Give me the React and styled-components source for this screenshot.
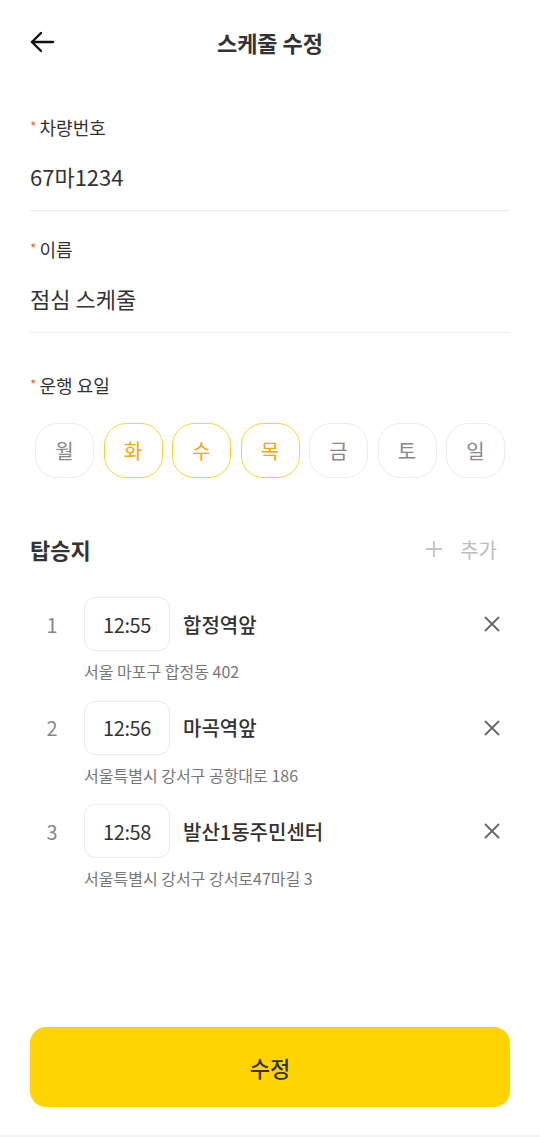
import styled, { createGlobalStyle } from "styled-components"

const GlobalStyle = createGlobalStyle`
  html, body {
    margin: 0;
    padding: 0;
    background: #fff;
  }
  body {
    font-family: "Noto Sans CJK KR", "Noto Sans", sans-serif;
    color: #333;
  }
  * { box-sizing: border-box; }
`

const Page = styled.div`
  width: 540px;
  height: 1137px;
  display: flex;
  flex-direction: column;
  border-bottom: 2px solid #f3f3f3;
`

const Header = styled.header`
  height: 84px;
  display: grid;
  grid-template-columns: 84px 1fr 84px;
  align-items: center;
`

const BackButton = styled.button`
  border: 0;
  background: none;
  padding: 0 0 0 29px;
  display: flex;
  align-items: center;
  height: 24px;
  cursor: pointer;
`

const Title = styled.h1`
  margin: 0;
  text-align: center;
  font-size: 22px;
  line-height: 30px;
  font-weight: 700;
  color: #333;
`

const Form = styled.div`
  padding: 5px 30px 0;
  display: flex;
  flex-direction: column;
  flex: 1;
`

const Field = styled.div`
  padding-top: ${p => p.$top || 26}px;
  border-bottom: ${p => (p.$line ? "1px solid #ebebeb" : "0")};
  padding-bottom: ${p => (p.$line ? 19 : 0)}px;
`

const Label = styled.div`
  font-size: 18px;
  line-height: 24px;
  color: #333;
  display: flex;
  align-items: center;
  gap: 3px;
`

const Star = styled.span`
  color: #ff6b15;
  font-size: 14px;
  line-height: 14px;
  align-self: flex-start;
  margin-top: 4px;
`

const Value = styled.div`
  margin-top: 22px;
  font-size: 22px;
  line-height: 30px;
  color: #333;
`

const Days = styled.div`
  margin-top: 26px;
  padding: 0 5px;
  display: flex;
  gap: 9.5px;
`

const Day = styled.button`
  width: 59px;
  height: 55px;
  border-radius: 22px;
  background: #fff;
  border: 1.5px solid ${p => (p.$on ? "#ffd22e" : "#ececec")};
  color: ${p => (p.$on ? "#f8a500" : "#888")};
  font-family: inherit;
  font-size: 20px;
  padding: 0;
  display: flex;
  align-items: center;
  justify-content: center;
`

const SectionHead = styled.div`
  margin-top: 56px;
  display: flex;
  align-items: center;
  justify-content: space-between;
  height: 30px;
`

const SectionTitle = styled.h2`
  margin: 0;
  font-size: 22px;
  font-weight: 700;
  color: #333;
`

const AddButton = styled.button`
  border: 0;
  background: none;
  padding: 0 13px 0 0;
  display: flex;
  align-items: center;
  gap: 18px;
  color: #bdbdbd;
  font-family: inherit;
  font-size: 20px;
`

const Stops = styled.ul`
  list-style: none;
  margin: 33px 0 0;
  padding: 0;
  display: flex;
  flex-direction: column;
  gap: 18.5px;
`

const Stop = styled.li`
  display: grid;
  grid-template-columns: 54px 86px 1fr 30px;
  grid-template-rows: 54px auto;
  row-gap: 9px;
  align-items: center;
  padding-right: 10px;
`

const Num = styled.span`
  font-size: 20px;
  color: #888;
  text-align: center;
  padding-right: 10px;
`

const TimeBox = styled.div`
  height: 54px;
  border: 1px solid #ebebeb;
  border-radius: 11px;
  display: flex;
  align-items: center;
  justify-content: center;
  font-size: 20px;
  color: #333;
  letter-spacing: -0.4px;
`

const StopName = styled.span`
  padding-left: 13px;
  font-size: 20px;
  font-weight: 500;
  color: #333;
`

const Remove = styled.button`
  border: 0;
  background: none;
  padding: 0;
  display: flex;
  align-items: center;
  justify-content: flex-end;
`

const Address = styled.div`
  grid-column: 2 / 5;
  font-size: 16px;
  line-height: 22px;
  color: #777;
`

const Spacer = styled.div`
  flex: 1;
`

const Submit = styled.button`
  margin-bottom: 28px;
  height: 80px;
  border: 0;
  border-radius: 16px;
  background: #ffd400;
  color: #333;
  font-family: inherit;
  font-size: 22px;
  font-weight: 500;
`

const days = [
  { label: "월", on: false },
  { label: "화", on: true },
  { label: "수", on: true },
  { label: "목", on: true },
  { label: "금", on: false },
  { label: "토", on: false },
  { label: "일", on: false },
]

const stops = [
  { time: "12:55", name: "합정역앞", address: "서울 마포구 합정동 402" },
  { time: "12:56", name: "마곡역앞", address: "서울특별시 강서구 공항대로 186" },
  { time: "12:58", name: "발산1동주민센터", address: "서울특별시 강서구 강서로47마길 3" },
]

const BackIcon = () => (
  <svg width="26" height="24" viewBox="0 0 26 24" fill="none" stroke="#111" strokeWidth="2.4" strokeLinecap="round" strokeLinejoin="round">
    <path d="M24 12H3" />
    <path d="M12 3l-9 9 9 9" />
  </svg>
)

const PlusIcon = () => (
  <svg width="16" height="16" viewBox="0 0 16 16" fill="none" stroke="#c4c4c4" strokeWidth="1.8">
    <path d="M8 0v16M0 8h16" />
  </svg>
)

const CloseIcon = () => (
  <svg width="16" height="16" viewBox="0 0 16 16" fill="none" stroke="#666" strokeWidth="1.8" strokeLinecap="round">
    <path d="M1.5 1.5l13 13M14.5 1.5l-13 13" />
  </svg>
)

const App = () => {
  return (
    <Page>
      <GlobalStyle />
      <Header>
        <BackButton aria-label="뒤로">
          <BackIcon />
        </BackButton>
        <Title>스케줄 수정</Title>
        <div />
      </Header>
      <Form>
        <Field $line>
          <Label><Star>*</Star>차량번호</Label>
          <Value>67마1234</Value>
        </Field>
        <Field $line>
          <Label><Star>*</Star>이름</Label>
          <Value>점심 스케줄</Value>
        </Field>
        <Field $top={40}>
          <Label><Star>*</Star>운행 요일</Label>
          <Days>
            {days.map(d => (
              <Day key={d.label} $on={d.on}>{d.label}</Day>
            ))}
          </Days>
        </Field>
        <SectionHead>
          <SectionTitle>탑승지</SectionTitle>
          <AddButton>
            <PlusIcon />
            추가
          </AddButton>
        </SectionHead>
        <Stops>
          {stops.map((s, i) => (
            <Stop key={s.time}>
              <Num>{i + 1}</Num>
              <TimeBox>{s.time}</TimeBox>
              <StopName>{s.name}</StopName>
              <Remove aria-label="삭제">
                <CloseIcon />
              </Remove>
              <Address>{s.address}</Address>
            </Stop>
          ))}
        </Stops>
        <Spacer />
        <Submit>수정</Submit>
      </Form>
    </Page>
  )
}

export default App
